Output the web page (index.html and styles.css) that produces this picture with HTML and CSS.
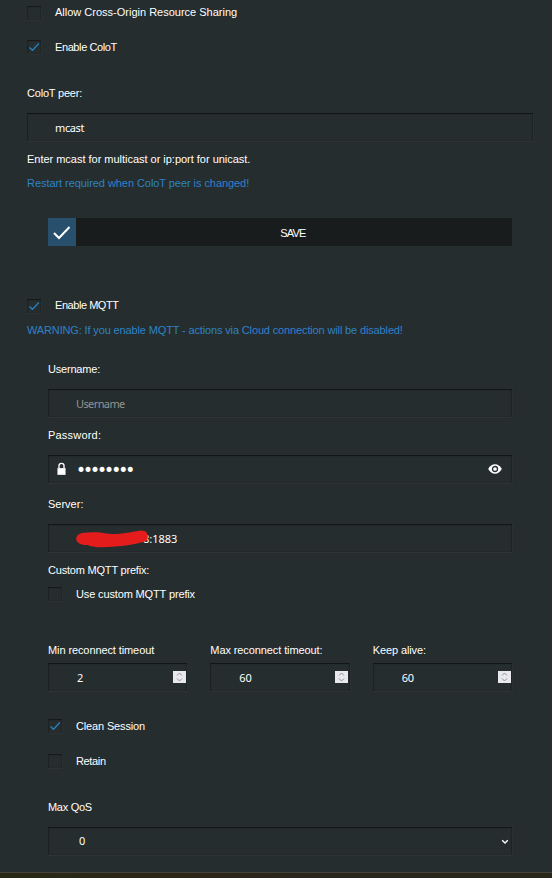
FILE: index.html
```
<!DOCTYPE html>
<html lang="en">
<head>
  <meta charset="UTF-8">
  <meta name="viewport" content="width=device-width, initial-scale=1.0">
  <title>Settings</title>
  <link rel="stylesheet" href="styles.css">
</head>
<body>

<main class="settings">
  <label class="check cors"><span class="box"></span><span>Allow Cross-Origin Resource Sharing</span></label>
  <label class="check coiot"><span class="box"><svg viewBox="0 0 14 14"><path d="M2.5 7.5L5.5 10.3L11.8 3.5"/></svg></span><span>Enable ColoT</span></label>

  <label class="title peer" for="peer">ColoT peer:</label>
  <div class="field"><input type="text" id="peer" value="mcast"></div>
  <p class="hint">Enter mcast for multicast or ip:port for unicast.</p>
  <p class="warning restart">Restart required when ColoT peer is changed!</p>

  <button class="save"><span class="save-icon"><svg viewBox="0 0 28 28"><path d="M6 15L11 20L21.5 9"/></svg></span><span class="save-text">SAVE</span></button>

  <label class="check mqtt"><span class="box"><svg viewBox="0 0 14 14"><path d="M2.5 7.5L5.5 10.3L11.8 3.5"/></svg></span><span>Enable MQTT</span></label>
  <p class="warning cloud">WARNING: If you enable MQTT - actions via Cloud connection will be disabled!</p>

  <section class="mqtt-form">
    <label class="title username" for="username">Username:</label>
    <div class="field"><input type="text" id="username" placeholder="Username"></div>

    <label class="title password" for="password">Password:</label>
    <div class="field">
      <svg class="lock" viewBox="0 0 10 14"><path d="M2.2 6V3.5a2.8 2.8 0 0 1 5.6 0V6" fill="none" stroke="#fff" stroke-width="1.5"/><path d="M.5 6h9v7.5h-9z" fill="#fff"/></svg>
      <input type="password" id="password" value="password">
      <svg class="eye" viewBox="0 0 14 10"><path d="M.2 5C2 1.8 4.2.3 7 .3S12 1.8 13.8 5C12 8.2 9.8 9.7 7 9.7S2 8.2.2 5z" fill="#fff"/><circle cx="7" cy="5" r="2.5" fill="none" stroke="#262d2f" stroke-width="1.3"/></svg>
    </div>

    <label class="title server" for="server">Server:</label>
    <div class="field">
      <input type="text" id="server" value="8:1883">
      <svg class="scribble" viewBox="0 0 76 22"><path d="M7 4C15 3 25 3 31 4.5C42 6 56 3 66 1.4C73 1 74 8 71.5 12C63 15 44 18 27 18.2C19 18.4 16 17.500 13 16C-1 17 -2 6 7 4z"/></svg>
    </div>

    <p class="title prefix">Custom MQTT prefix:</p>
    <label class="check custom"><span class="box"></span><span>Use custom MQTT prefix</span></label>

    <div class="timeouts">
      <div>
        <label class="title" for="min">Min reconnect timeout</label>
        <div class="field"><input type="text" id="min" value="2"><span class="spin"><svg viewBox="0 0 13 12"><path d="M4 4.5L6.5 2L9 4.5M4 7.5L6.5 10L9 7.5"/></svg></span></div>
      </div>
      <div>
        <label class="title" for="max">Max reconnect timeout:</label>
        <div class="field"><input type="text" id="max" value="60"><span class="spin"><svg viewBox="0 0 13 12"><path d="M4 4.5L6.5 2L9 4.5M4 7.5L6.5 10L9 7.5"/></svg></span></div>
      </div>
      <div>
        <label class="title" for="keep">Keep alive:</label>
        <div class="field"><input type="text" id="keep" value="60"><span class="spin"><svg viewBox="0 0 13 12"><path d="M4 4.5L6.5 2L9 4.5M4 7.5L6.5 10L9 7.5"/></svg></span></div>
      </div>
    </div>

    <label class="check clean"><span class="box"><svg viewBox="0 0 14 14"><path d="M2.5 7.5L5.5 10.3L11.8 3.5"/></svg></span><span>Clean Session</span></label>
    <label class="check retain"><span class="box"></span><span>Retain</span></label>

    <label class="title qos" for="qos">Max QoS</label>
    <div class="field">
      <select id="qos"><option>0</option><option>1</option><option>2</option></select>
      <svg class="arrow" viewBox="0 0 8 6"><path d="M1.2 1.2L4 4L6.8 1.2"/></svg>
    </div>
  </section>
</main>
<footer class="bottom"></footer>

</body>
</html>
```
FILE: styles.css
```
* {
  box-sizing: border-box;
}

body {
  margin: 0;
  height: 878px;
  overflow: hidden;
  background: #262d2f;
  color: #fff;
  font: 11px/14px "Liberation Sans", Arial, sans-serif;
  display: flex;
  flex-direction: column;
}

p {
  margin: 0;
}

svg {
  display: block;
}

.settings {
  height: 872px;
  padding: 6px 19px 0 27px;
}

.check {
  display: flex;
  gap: 14px;
  height: 14px;
}

.box {
  width: 14px;
  height: 14px;
  box-shadow: inset 0 1px 1px #14191a, inset 1px 0 1px #1e2425, inset -1px 0 1px #212829, 0 1px 0 #2d3234, 1px 0 0 #2a2f31;
}

.box svg {
  width: 14px;
  height: 14px;
}

.box path {
  fill: none;
  stroke: #2780bd;
  stroke-width: 1.3;
}

.cors span + span {
  margin-top: -1px;
}

.coiot {
  margin-top: 20px;
  letter-spacing: -0.4px;
}

.title {
  display: block;
  height: 14px;
  margin-bottom: 13px;
  white-space: nowrap;
}

.peer {
  margin-top: 32px;
  letter-spacing: -0.2px;
}

.field {
  position: relative;
  height: 28px;
  display: flex;
  align-items: center;
  box-shadow: inset 0 1px 1px #101415, inset 1px 0 1px #1d2324, inset -1px 0 1px #202627, 0 1px 0 #2e3335, 1px 0 0 #2b3032;
}

.field input,
.field select {
  appearance: none;
  width: 100%;
  height: 28px;
  border: none;
  outline: none;
  border-radius: 0;
  margin: 0;
  padding: 0 28px;
  background: transparent;
  color: #fff;
  font: 11px "Noto Sans", "Open Sans", sans-serif;
  letter-spacing: -0.1px;
}

.field #peer {
  letter-spacing: -0.4px;
}

.field #username {
  letter-spacing: -0.6px;
}

.field #password {
  padding: 1px 28px 0;
  font: 17px "DejaVu Sans", sans-serif;
  letter-spacing: -3px;
}

.field input::placeholder {
  color: #909495;
}

.hint {
  margin-top: 11px;
  letter-spacing: -0.02px;
}

.warning {
  color: #2e82c6;
  white-space: nowrap;
}

.restart {
  margin-top: 10px;
  letter-spacing: -0.06px;
}

.save {
  display: flex;
  align-items: center;
  width: 464px;
  height: 28px;
  margin: 28px 0 0 21px;
  padding: 0;
  border: none;
  background: #181c1d;
  color: #fff;
  font: inherit;
}

.save-icon {
  width: 28px;
  height: 28px;
  background: #28506c;
}

.save-icon path {
  fill: none;
  stroke: #fff;
  stroke-width: 2;
}

.save-text {
  flex: 1;
  padding: 2px 2px 0 0;
  letter-spacing: -0.8px;
}

.mqtt {
  margin-top: 53px;
  letter-spacing: -0.45px;
}

.mqtt span + span {
  margin-top: -1px;
}

.cloud {
  margin-top: 10px;
  letter-spacing: -0.14px;
}

.mqtt-form {
  width: 464px;
  margin: 25px 0 0 21px;
}

.username {
  letter-spacing: -0.2px;
}

.password {
  margin-top: 11px;
  letter-spacing: 0.2px;
}

.server {
  margin-top: 14px;
}

.prefix {
  margin-top: 11px;
  margin-bottom: 10px;
  letter-spacing: -0.2px;
}

.custom {
  letter-spacing: -0.14px;
}

.lock {
  position: absolute;
  left: 9px;
  top: 7px;
  width: 9px;
  height: 14px;
}

.eye {
  position: absolute;
  right: 10px;
  top: 9px;
  width: 14px;
  height: 10px;
}

.field #server {
  padding-left: 95px;
  letter-spacing: 0;
}

.scribble {
  position: absolute;
  left: 27px;
  top: 5px;
  width: 76px;
  height: 22px;
}

.scribble path {
  fill: #e51c1c;
}

.timeouts {
  display: grid;
  grid-template-columns: repeat(3, 1fr);
  column-gap: 23px;
  margin-top: 42px;
}

.timeouts .title {
  margin-bottom: 6px;
  letter-spacing: -0.1px;
}

.timeouts .field input {
  padding-left: 29px;
}

.spin {
  position: absolute;
  right: 1.3px;
  top: 8px;
  width: 13px;
  height: 12px;
  background: #e9e9ed;
}

.spin path {
  fill: none;
  stroke: #8f8f9d;
}

.clean {
  margin-top: 28px;
  letter-spacing: -0.15px;
}

.retain {
  margin-top: 21px;
  letter-spacing: -0.35px;
}

.qos {
  margin-top: 32px;
  letter-spacing: -0.3px;
}

.field select {
  padding: 0 28px 2px 31px;
}

.arrow {
  position: absolute;
  right: 3px;
  top: 12px;
  width: 8px;
  height: 6px;
}

.arrow path {
  fill: none;
  stroke: #fff;
  stroke-width: 1.4;
}

.bottom {
  height: 6px;
  border-top: 1px solid #45423a;
  background: linear-gradient(to right, #282915, #2d2517 35%, #29261f 60%, #29261a);
}
```
